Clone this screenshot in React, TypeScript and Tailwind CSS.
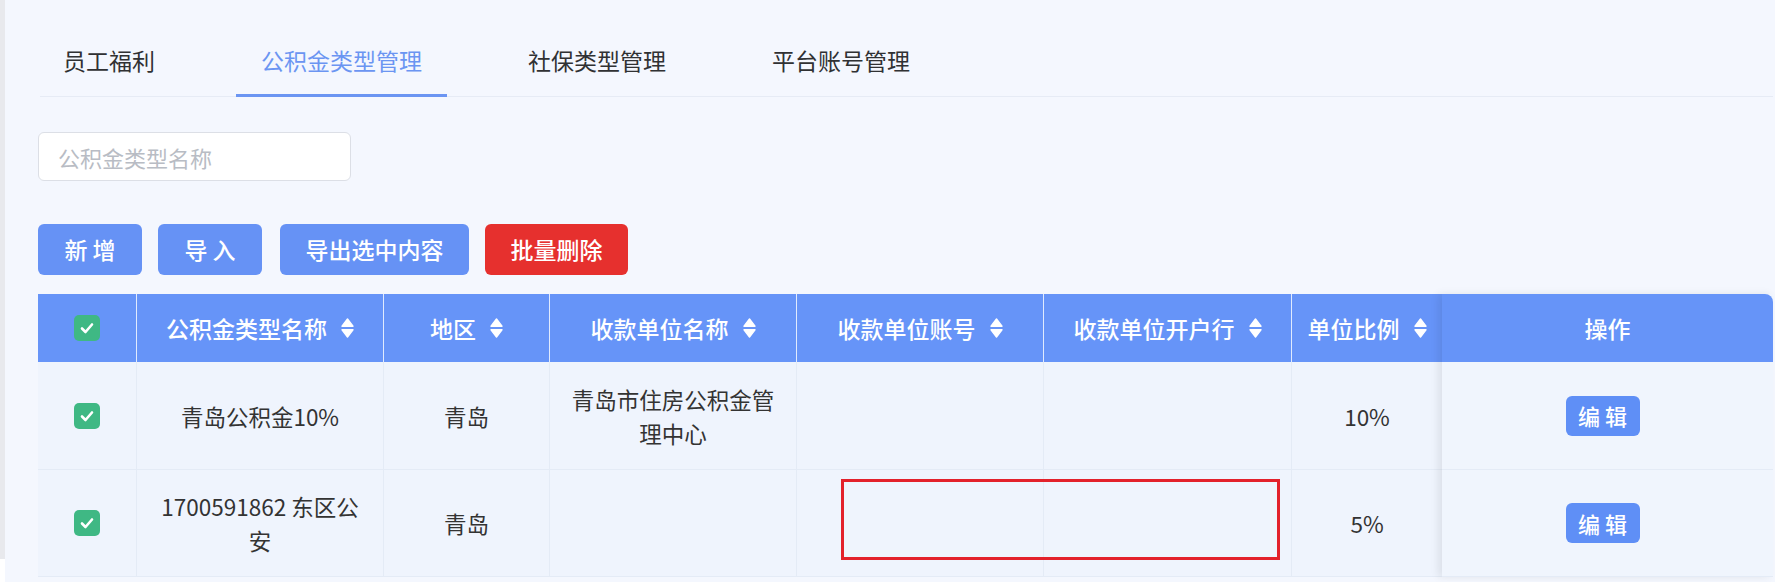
import { ReactNode } from 'react';

const tabs = ['员工福利', '公积金类型管理', '社保类型管理', '平台账号管理'];

const SortIcon = () => (
  <svg width="13" height="20" viewBox="0 0 13 20" className="ml-[14px] shrink-0">
    <path d="M6.5 1 L12 8.2 L1 8.2 Z" fill="white" strokeLinejoin="round" stroke="white" strokeWidth="1.4" />
    <path d="M1 11.8 L12 11.8 L6.5 19 Z" fill="white" strokeLinejoin="round" stroke="white" strokeWidth="1.4" />
  </svg>
);

const Check = () => (
  <div className="w-[26px] h-[26px] rounded-[5px] bg-[#3fb884] flex items-center justify-center">
    <svg width="16" height="16" viewBox="0 0 16 16">
      <path d="M3 8.5 L6.5 12 L13 4.5" fill="none" stroke="white" strokeWidth="2.6" strokeLinecap="round" strokeLinejoin="round" />
    </svg>
  </div>
);

const HeadCell = ({ children, sort = true, last = false }: { children: ReactNode; sort?: boolean; last?: boolean }) => (
  <div className={`h-[68px] flex items-center justify-center text-white text-[23px] font-medium ${last ? '' : 'border-r border-white/80'}`}>
    {children}
    {sort && <SortIcon />}
  </div>
);

const Cell = ({ children, last = false }: { children?: ReactNode; last?: boolean }) => (
  <div className={`flex items-center justify-center text-center text-[22.5px] leading-[34px] text-[#333] border-b border-[#e4ebf6] ${last ? '' : 'border-r'}`}>
    {children}
  </div>
);

const rows = [
  { name: <>青岛公积金10%</>, area: '青岛', unit: <>青岛市住房公积金管<br />理中心</>, ratio: '10%', h: 'h-[108px]' },
  { name: <>1700591862 东区公<br />安</>, area: '青岛', unit: null, ratio: '5%', h: 'h-[107px]' },
];

export default function App() {
  return (
    <div className="flex min-h-[582px] bg-[#f4f7fe] font-['Noto_Sans_CJK_SC',sans-serif] text-[#303133]">
      <div className="w-[5px] shrink-0 flex flex-col">
        <div className="h-[559px] bg-[#e8e9ed]" />
        <div className="flex-1 bg-white" />
      </div>

      <div className="flex-1 pl-[33px] pr-[2px]">
        {/* tabs */}
        <div className="flex gap-[56px] pt-[26px] border-b border-[#e6ebf5] ml-[2px]">
          {tabs.map((t, i) => (
            <div
              key={t}
              className={`h-[71px] -mb-px flex items-center px-[25px] border-b-[3px] text-[23px] ${
                i === 1 ? 'border-[#6b95f2] text-[#6b95f2]' : 'border-transparent text-[#303133]'
              } ${i === 0 ? '-ml-[2px]' : ''}`}
            >
              {t}
            </div>
          ))}
        </div>

        {/* search */}
        <input
          placeholder="公积金类型名称"
          className="mt-[35px] block w-[313px] h-[49px] rounded-[6px] border border-[#dcdfe6] bg-white px-[19px] text-[22px] outline-none placeholder:text-[#b8bcc4]"
        />

        {/* actions */}
        <div className="mt-[43px] flex gap-[16px]">
          <button className="w-[104px] h-[51px] rounded-[6px] bg-[#6692f5] text-white text-[23px] font-medium">新 增</button>
          <button className="w-[104px] h-[51px] rounded-[6px] bg-[#6692f5] text-white text-[23px] font-medium">导 入</button>
          <button className="w-[189px] h-[51px] rounded-[6px] bg-[#6692f5] text-white text-[23px] font-medium ml-[2px]">导出选中内容</button>
          <button className="w-[143px] h-[51px] rounded-[6px] bg-[#e6302e] text-white text-[23px] font-medium">批量删除</button>
        </div>

        {/* table */}
        <div className="mt-[19px] flex">
          <div className="relative grid grid-cols-[99px_247px_166px_247px_247px_248px_150px] bg-[#eff4fd]">
            <div className="h-[68px] flex items-center justify-center border-r border-white/80 bg-[#6694f8]">
              <Check />
            </div>
            <div className="contents [&>div]:bg-[#6694f8]">
              <HeadCell>公积金类型名称</HeadCell>
              <HeadCell>地区</HeadCell>
              <HeadCell>收款单位名称</HeadCell>
              <HeadCell>收款单位账号</HeadCell>
              <HeadCell>收款单位开户行</HeadCell>
              <HeadCell last>单位比例</HeadCell>
            </div>

            {rows.map((r, i) => (
              <div key={i} className="contents">
                <div className={`${r.h} flex items-center justify-center border-r border-b border-[#e4ebf6]`}>
                  <Check />
                </div>
                <Cell>{r.name}</Cell>
                <Cell>{r.area}</Cell>
                <Cell>{r.unit}</Cell>
                <Cell />
                <Cell />
                <Cell last>{r.ratio}</Cell>
              </div>
            ))}

            <div className="absolute left-[803px] top-[185px] w-[439px] h-[81px] border-[3px] border-[#e3212b]" />
          </div>

          <div className="relative z-10 flex-1 flex flex-col bg-[#f0f5fd] shadow-[-4px_0_8px_rgba(0,0,0,0.08)]">
            <div className="h-[68px] flex items-center justify-center bg-[#6694f8] rounded-tr-[8px] text-white text-[23px] font-medium">
              操作
            </div>
            {rows.map((r, i) => (
              <div key={i} className={`${r.h} flex items-center justify-center border-b border-[#e4ebf6] pr-[10px]`}>
                <button className="w-[74px] h-[40px] rounded-[6px] bg-[#5f8ff6] text-white text-[22px] font-medium">编 辑</button>
              </div>
            ))}
          </div>
        </div>
      </div>
    </div>
  );
}
